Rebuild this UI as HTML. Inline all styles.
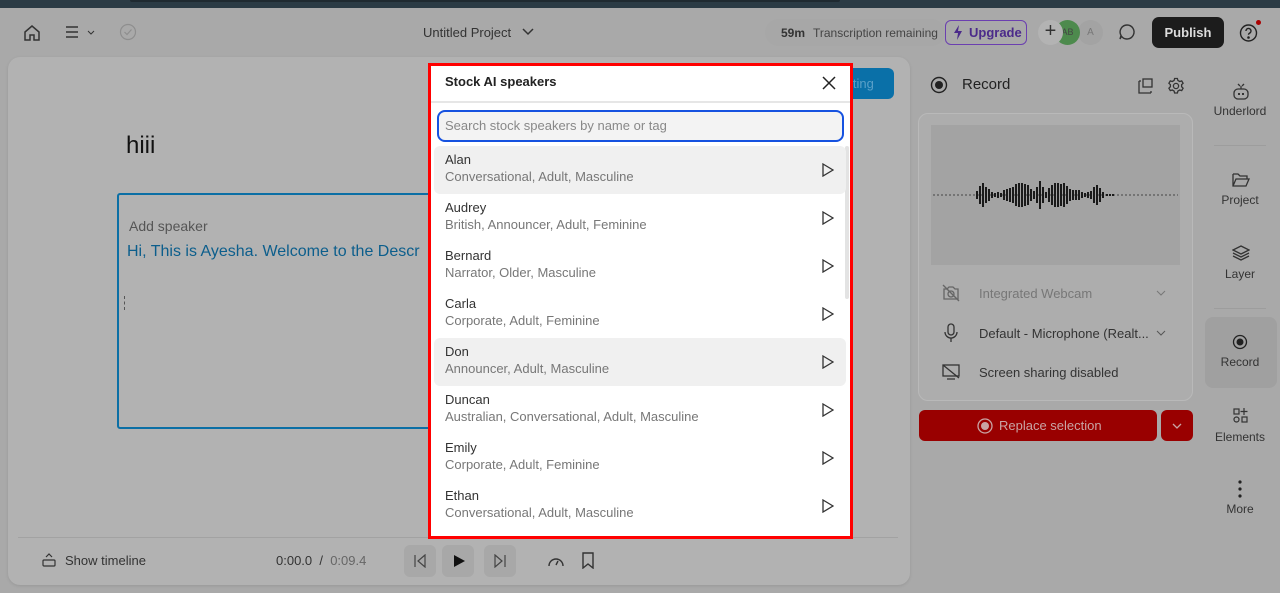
<!DOCTYPE html>
<html><head><meta charset="utf-8"><style>
*{box-sizing:border-box;margin:0;padding:0}
html,body{background:#a9a9a9}
body{width:1280px;height:593px;overflow:hidden;font-family:"Liberation Sans",sans-serif;position:relative;color:#222}
.abs{position:absolute}
.top{left:0;top:0;width:1280px;height:8px;background:#2b3b45}
.top .bar{left:130px;top:0;width:710px;height:2px;background:#1f2a31;border-radius:0 0 4px 4px}
.t{font-size:13px;color:#333;white-space:nowrap}
.panel{left:8px;top:57px;width:902px;height:528px;background:#b2b2b2;border-radius:12px;box-shadow:0 1px 3px rgba(0,0,0,.1)}
.rp{left:918px;top:113px;width:275px;height:288px;border:1px solid #b9b9b9;border-radius:10px;background:#adadad}
.modal{left:428px;top:63px;width:425px;height:476px;border:3px solid #f00;background:#fff}
.row{position:absolute;left:3px;width:412px;height:48px;border-radius:6px}
.row .n{position:absolute;left:11px;top:6px;font-size:13px;color:#333}
.row .s{position:absolute;left:11px;top:23px;font-size:13px;color:#777}
.row svg{position:absolute;left:388px;top:17px}
.side{font-size:12px;color:#333;text-align:center;width:70px;left:1205px}
</style></head><body>
<div class="abs top"><div class="abs bar"></div></div>

<svg class="abs" style="left:23px;top:24px" width="18" height="18" viewBox="0 0 18 18" fill="none" stroke="#333" stroke-width="1.5"><path d="M2 8 L9 2 L16 8 V16 H11 V11 H7 V16 H2 Z"/></svg>
<svg class="abs" style="left:66px;top:26px" width="30" height="14" fill="none" stroke="#333" stroke-width="1.4"><path d="M0 1H12M0 6H12M0 11H12"/><path d="M22 5l3 3 3-3" stroke-width="1"/></svg>
<svg class="abs" style="left:119px;top:23px" width="18" height="18" fill="none" stroke="#8e8e8e" stroke-width="1.2"><circle cx="9" cy="9" r="7.5"/><path d="M5.5 9l2.5 2.5 4.5-5"/></svg>
<div class="abs t" style="left:423px;top:25px;font-size:13px">Untitled Project</div>
<svg class="abs" style="left:522px;top:28px" width="12" height="8" fill="none" stroke="#333" stroke-width="1.5"><path d="M1 1l5 5 5-5"/></svg>

<div class="abs" style="left:765px;top:19px;width:180px;height:27px;background:#a7a7a7;border-radius:14px"></div>
<div class="abs t" style="left:781px;top:26px;font-weight:bold;font-size:12px">59m</div>
<div class="abs t" style="left:813px;top:26px;font-size:12px;color:#444">Transcription remaining</div>
<div class="abs" style="left:945px;top:20px;width:82px;height:25px;border:1.5px solid #6b3fb0;border-radius:6px;color:#4b2a8a;font-size:13px;font-weight:bold;padding:4px 0 0 23px">Upgrade</div>
<svg class="abs" style="left:953px;top:25px" width="10" height="15"><path d="M6 0L1 8H5L4 15L9 6H5Z" fill="#4b2a8a"/></svg>
<div class="abs" style="left:1078px;top:20px;width:25px;height:25px;border-radius:50%;background:#a3a3a3;color:#777;font-size:10px;text-align:center;line-height:25px">A</div>
<div class="abs" style="left:1055px;top:20px;width:25px;height:25px;border-radius:50%;background:#4d8a4d;color:#444;font-size:9px;text-align:center;line-height:25px">AB</div>
<div class="abs" style="left:1038px;top:20px;width:25px;height:25px;border-radius:50%;background:#b3b3b3;color:#333;font-size:20px;text-align:center;line-height:23px">+</div>
<svg class="abs" style="left:1118px;top:23px" width="18" height="18" fill="none" stroke="#333" stroke-width="1.4"><path d="M9 2a7 7 0 1 1-5.5 11.3L2 16l1-3.6A7 7 0 0 1 9 2z"/></svg>
<div class="abs" style="left:1152px;top:17px;width:72px;height:31px;background:#1c1c1c;border-radius:7px;color:#ddd;font-size:13px;font-weight:bold;text-align:center;line-height:31px">Publish</div>
<svg class="abs" style="left:1239px;top:23px" width="20" height="20" fill="none" stroke="#222" stroke-width="1.4"><circle cx="9.5" cy="10" r="8"/><path d="M7 8a2.5 2.5 0 1 1 3.5 2.2c-.8.4-1 .9-1 1.6"/><circle cx="9.5" cy="14.5" r=".6" fill="#222"/></svg>
<div class="abs" style="left:1256px;top:20px;width:5px;height:5px;border-radius:50%;background:#a00"></div>

<div class="abs panel"></div>
<div class="abs" style="left:830px;top:68px;width:64px;height:31px;background:#0a70a8;border-radius:6px;color:#5aa0c8;font-size:13px;padding:8px 0 0 20px">iting</div>
<div class="abs" style="left:126px;top:132px;font-size:24px;color:#111">hiii</div>
<div class="abs" style="left:117px;top:193px;width:320px;height:236px;border:2px solid #0b6fa5;border-radius:3px"></div>
<div class="abs" style="left:129px;top:218px;font-size:14px;color:#555">Add speaker</div>
<div class="abs" style="left:127px;top:243px;font-size:16px;color:#0c5e8c;white-space:nowrap">Hi, This is Ayesha. Welcome to the Descr</div>
<div class="abs" style="left:124px;top:296px;width:1px;height:14px;border-left:1px dashed #555"></div>
<div class="abs" style="left:18px;top:537px;width:880px;height:1px;background:#a2a2a2"></div>
<svg class="abs" style="left:42px;top:553px" width="14" height="14" fill="none" stroke="#333" stroke-width="1.2"><path d="M4 4l3-3 3 3"/><rect x="1" y="7" width="12" height="6" rx="1"/></svg>
<div class="abs t" style="left:65px;top:553px">Show timeline</div>
<div class="abs t" style="left:276px;top:553px;color:#333">0:00.0 &nbsp;/&nbsp; <span style="color:#666">0:09.4</span></div>
<div class="abs" style="left:404px;top:545px;width:32px;height:32px;border-radius:6px;background:#a8a8a8"></div>
<div class="abs" style="left:442px;top:545px;width:32px;height:32px;border-radius:6px;background:#a8a8a8"></div>
<div class="abs" style="left:484px;top:545px;width:32px;height:32px;border-radius:6px;background:#a8a8a8"></div>
<svg class="abs" style="left:413px;top:554px" width="14" height="14" fill="none" stroke="#444" stroke-width="1.2"><path d="M2 1v12M12 1L5 7l7 6z"/></svg>
<svg class="abs" style="left:452px;top:554px" width="14" height="14"><path d="M2 1l11 6-11 6z" fill="#111"/></svg>
<svg class="abs" style="left:493px;top:554px" width="14" height="14" fill="none" stroke="#444" stroke-width="1.2"><path d="M12 1v12M2 1l7 6-7 6z"/></svg>
<svg class="abs" style="left:547px;top:553px" width="18" height="16" fill="none" stroke="#333" stroke-width="1.4"><path d="M2 13a7 7 0 1 1 14 0"/><path d="M9 12l2-4"/></svg>
<svg class="abs" style="left:581px;top:552px" width="14" height="17" fill="none" stroke="#333" stroke-width="1.4"><path d="M2 1h10v15l-5-4-5 4z"/></svg>

<svg class="abs" style="left:930px;top:76px" width="18" height="18"><circle cx="9" cy="9" r="7.5" fill="none" stroke="#222" stroke-width="1.4"/><circle cx="9" cy="9" r="4" fill="#222"/></svg>
<div class="abs" style="left:962px;top:76px;font-size:15px;color:#222">Record</div>
<svg class="abs" style="left:1138px;top:78px" width="16" height="16" fill="none" stroke="#333" stroke-width="1.3"><path d="M1 3v12h12"/><path d="M1 3h2M13 15v-2"/><rect x="5" y="1" width="9" height="8"/></svg>
<svg class="abs" style="left:1167px;top:77px" width="18" height="18" fill="none" stroke="#333" stroke-width="1.3"><circle cx="9" cy="9" r="2.6"/><path d="M7.6 1.5h2.8l.5 2 1.8 1 2-.6 1.4 2.4-1.5 1.4v2l1.5 1.5-1.4 2.4-2-.6-1.8 1-.5 2H7.6l-.5-2-1.8-1-2 .6-1.4-2.4 1.5-1.5v-2L1.9 6.3l1.4-2.4 2 .6 1.8-1z"/></svg>
<div class="abs rp"></div>
<div class="abs" style="left:931px;top:125px;width:249px;height:140px;background:#a3a3a3"></div>
<svg class="abs" style="left:931px;top:175px" width="249" height="40">
<line x1="2" y1="20" x2="247" y2="20" stroke="#444" stroke-width="1" stroke-dasharray="2 2"/>
<g stroke="#1a1a1a" stroke-width="2">
<line x1="46" y1="16" x2="46" y2="24"/><line x1="49" y1="11" x2="49" y2="29"/><line x1="52" y1="8" x2="52" y2="32"/><line x1="55" y1="12" x2="55" y2="28"/><line x1="58" y1="14" x2="58" y2="26"/><line x1="61" y1="17" x2="61" y2="23"/><line x1="64" y1="18" x2="64" y2="22"/><line x1="67" y1="17" x2="67" y2="23"/><line x1="70" y1="18" x2="70" y2="22"/><line x1="73" y1="15" x2="73" y2="25"/><line x1="76" y1="14" x2="76" y2="26"/><line x1="79" y1="13" x2="79" y2="27"/><line x1="82" y1="12" x2="82" y2="28"/><line x1="85" y1="9" x2="85" y2="31"/><line x1="88" y1="8" x2="88" y2="32"/><line x1="91" y1="8" x2="91" y2="32"/><line x1="94" y1="9" x2="94" y2="31"/><line x1="97" y1="10" x2="97" y2="30"/><line x1="100" y1="14" x2="100" y2="26"/><line x1="103" y1="16" x2="103" y2="24"/><line x1="106" y1="12" x2="106" y2="28"/><line x1="109" y1="6" x2="109" y2="34"/><line x1="112" y1="12" x2="112" y2="28"/><line x1="115" y1="17" x2="115" y2="23"/><line x1="118" y1="13" x2="118" y2="27"/><line x1="121" y1="10" x2="121" y2="30"/><line x1="124" y1="8" x2="124" y2="32"/><line x1="127" y1="8" x2="127" y2="32"/><line x1="130" y1="9" x2="130" y2="31"/><line x1="133" y1="8" x2="133" y2="32"/><line x1="136" y1="11" x2="136" y2="29"/><line x1="139" y1="14" x2="139" y2="26"/><line x1="142" y1="15" x2="142" y2="25"/><line x1="145" y1="15" x2="145" y2="25"/><line x1="148" y1="15" x2="148" y2="25"/><line x1="151" y1="17" x2="151" y2="23"/><line x1="154" y1="18" x2="154" y2="22"/><line x1="157" y1="17" x2="157" y2="23"/><line x1="160" y1="16" x2="160" y2="24"/><line x1="163" y1="12" x2="163" y2="28"/><line x1="166" y1="10" x2="166" y2="30"/><line x1="169" y1="13" x2="169" y2="27"/><line x1="172" y1="17" x2="172" y2="23"/><line x1="176" y1="19" x2="176" y2="21"/><line x1="179" y1="19" x2="179" y2="21"/><line x1="182" y1="19" x2="182" y2="21"/>
</g></svg>
<svg class="abs" style="left:942px;top:284px" width="18" height="18" fill="none" stroke="#666" stroke-width="1.3"><path d="M2 5h3l2-2h4l2 2h3v10H2z"/><circle cx="9" cy="10" r="3"/><path d="M1 1l16 16"/></svg>
<div class="abs t" style="left:979px;top:286px;color:#777">Integrated Webcam</div>
<svg class="abs" style="left:1156px;top:290px" width="10" height="6" fill="none" stroke="#777"><path d="M1 1l4 4 4-4"/></svg>
<svg class="abs" style="left:943px;top:323px" width="16" height="20" fill="none" stroke="#333" stroke-width="1.3"><rect x="5" y="1" width="6" height="11" rx="3"/><path d="M2 9a6 6 0 0 0 12 0M8 15v4"/></svg>
<div class="abs t" style="left:979px;top:326px">Default - Microphone (Realt...</div>
<svg class="abs" style="left:1156px;top:330px" width="10" height="6" fill="none" stroke="#555"><path d="M1 1l4 4 4-4"/></svg>
<svg class="abs" style="left:942px;top:364px" width="18" height="16" fill="none" stroke="#333" stroke-width="1.3"><rect x="1" y="1" width="16" height="11"/><path d="M5 15h8M1 1l16 13"/></svg>
<div class="abs t" style="left:979px;top:365px">Screen sharing disabled</div>
<div class="abs" style="left:919px;top:410px;width:238px;height:31px;background:#990000;border-radius:6px;color:#c9a4a4;font-size:13px;line-height:31px;padding-left:80px">Replace selection</div>
<svg class="abs" style="left:976px;top:417px" width="18" height="18"><circle cx="9" cy="9" r="7" fill="none" stroke="#c9a4a4" stroke-width="1.3"/><circle cx="9" cy="9" r="4" fill="#c9a4a4"/></svg>
<div class="abs" style="left:1161px;top:410px;width:32px;height:31px;background:#990000;border-radius:6px"></div>
<svg class="abs" style="left:1172px;top:423px" width="10" height="6" fill="none" stroke="#c9a4a4" stroke-width="1.3"><path d="M1 1l4 4 4-4"/></svg>

<svg class="abs" style="left:1232px;top:82px" width="18" height="18" fill="none" stroke="#333" stroke-width="1.3"><rect x="2" y="7" width="14" height="10" rx="4"/><path d="M9 7V4M6 2l2 2M12 2l-2 2"/><path d="M7 11v2M11 11v2" stroke-width="2"/></svg>
<div class="abs side" style="top:104px">Underlord</div>
<div class="abs" style="left:1214px;top:145px;width:52px;height:1px;background:#9d9d9d"></div>
<svg class="abs" style="left:1232px;top:172px" width="18" height="16" fill="none" stroke="#333" stroke-width="1.3"><path d="M1 2h5l2 2h7v3M1 2v12h13l3-7H4l-3 7"/></svg>
<div class="abs side" style="top:193px">Project</div>
<svg class="abs" style="left:1232px;top:245px" width="18" height="16" fill="none" stroke="#333" stroke-width="1.3"><path d="M9 1l8 4-8 4-8-4z"/><path d="M1 8l8 4 8-4M1 11l8 4 8-4"/></svg>
<div class="abs side" style="top:267px">Layer</div>
<div class="abs" style="left:1214px;top:308px;width:52px;height:1px;background:#9d9d9d"></div>
<div class="abs" style="left:1205px;top:317px;width:72px;height:71px;background:#a0a0a0;border-radius:8px"></div>
<svg class="abs" style="left:1232px;top:334px" width="16" height="16"><circle cx="8" cy="8" r="6.5" fill="none" stroke="#222" stroke-width="1.3"/><circle cx="8" cy="8" r="3.5" fill="#222"/></svg>
<div class="abs side" style="top:355px">Record</div>
<svg class="abs" style="left:1233px;top:408px" width="15" height="15" fill="none" stroke="#333" stroke-width="1.2"><rect x="1" y="1" width="5" height="5"/><path d="M11 0v7M7.5 3.5h7"/><circle cx="3.5" cy="11.5" r="2.5"/><rect x="9" y="9" width="5" height="5"/></svg>
<div class="abs side" style="top:430px">Elements</div>
<svg class="abs" style="left:1238px;top:480px" width="4" height="18"><circle cx="2" cy="2" r="1.6" fill="#222"/><circle cx="2" cy="9" r="1.6" fill="#222"/><circle cx="2" cy="16" r="1.6" fill="#222"/></svg>
<div class="abs side" style="top:502px">More</div>

<div class="abs modal">
 <div class="abs" style="left:14px;top:8px;font-size:13px;font-weight:bold;color:#222">Stock AI speakers</div>
 <svg class="abs" style="left:391px;top:10px" width="14" height="14" stroke="#222" stroke-width="1.5"><path d="M1 1l12 12M13 1L1 13"/></svg>
 <div class="abs" style="left:0;top:35px;width:419px;height:2px;background:#e6e6e6"></div>
 <div class="abs" style="left:6px;top:44px;width:407px;height:32px;border:2px solid #1652e0;border-radius:8px;background:#f3f3f3;font-size:13px;color:#888;padding:6px 0 0 6px">Search stock speakers by name or tag</div>
 <div class="abs" style="left:414px;top:80px;width:4px;height:153px;background:#e3e3e3;border-radius:2px"></div>
 <div class="row" style="top:80px;background:#f0f0f0"><div class="n">Alan</div><div class="s">Conversational, Adult, Masculine</div><svg width="12" height="14" fill="none" stroke="#333" stroke-width="1.3"><path d="M1 1l10 6-10 6z"/></svg></div>
 <div class="row" style="top:128px"><div class="n">Audrey</div><div class="s">British, Announcer, Adult, Feminine</div><svg width="12" height="14" fill="none" stroke="#333" stroke-width="1.3"><path d="M1 1l10 6-10 6z"/></svg></div>
 <div class="row" style="top:176px"><div class="n">Bernard</div><div class="s">Narrator, Older, Masculine</div><svg width="12" height="14" fill="none" stroke="#333" stroke-width="1.3"><path d="M1 1l10 6-10 6z"/></svg></div>
 <div class="row" style="top:224px"><div class="n">Carla</div><div class="s">Corporate, Adult, Feminine</div><svg width="12" height="14" fill="none" stroke="#333" stroke-width="1.3"><path d="M1 1l10 6-10 6z"/></svg></div>
 <div class="row" style="top:272px;background:#f0f0f0"><div class="n">Don</div><div class="s">Announcer, Adult, Masculine</div><svg width="12" height="14" fill="none" stroke="#333" stroke-width="1.3"><path d="M1 1l10 6-10 6z"/></svg></div>
 <div class="row" style="top:320px"><div class="n">Duncan</div><div class="s">Australian, Conversational, Adult, Masculine</div><svg width="12" height="14" fill="none" stroke="#333" stroke-width="1.3"><path d="M1 1l10 6-10 6z"/></svg></div>
 <div class="row" style="top:368px"><div class="n">Emily</div><div class="s">Corporate, Adult, Feminine</div><svg width="12" height="14" fill="none" stroke="#333" stroke-width="1.3"><path d="M1 1l10 6-10 6z"/></svg></div>
 <div class="row" style="top:416px"><div class="n">Ethan</div><div class="s">Conversational, Adult, Masculine</div><svg width="12" height="14" fill="none" stroke="#333" stroke-width="1.3"><path d="M1 1l10 6-10 6z"/></svg></div>
</div>
</body></html>
